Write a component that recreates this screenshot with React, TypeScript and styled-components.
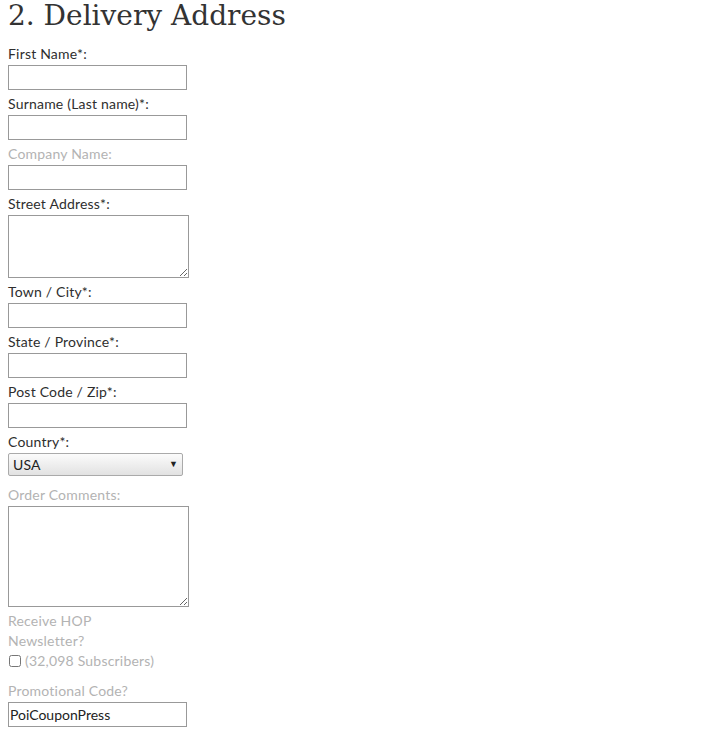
import React from 'react';
import styled, {createGlobalStyle} from 'styled-components';

const Global = createGlobalStyle`
  body {
    margin: 0;
    padding: 0 8px;
    background: white;
    font-family: Lato, "Open Sans", sans-serif;
    color: #333;
  }
`;

const Title = styled.h2`
  font-family: "DejaVu Serif", "Liberation Serif", serif;
  font-weight: 300;
  font-size: 28px;
  line-height: 32px;
  margin: 0 0 12px;
  color: #333;
`;

const Form = styled.form`
  display: flex;
  flex-direction: column;
  align-items: flex-start;
`;

const Label = styled.label<{$muted?: boolean; $narrow?: boolean}>`
  display: block;
  font-size: 14px;
  line-height: 20px;
  letter-spacing: 0.2px;
  color: ${p => (p.$muted ? '#b3b3b3' : '#2e2e2e')};
  width: ${p => (p.$narrow ? '100px' : 'auto')};
`;

const Input = styled.input`
  box-sizing: border-box;
  width: 179px;
  height: 25px;
  margin: 1px 0 4px;
  border: 1px solid #999;
  padding: 2px 1px;
  font-family: Lato, sans-serif;
  font-size: 14px;
  color: #222;
`;

const Area = styled.textarea<{$rows: number}>`
  box-sizing: border-box;
  display: block;
  width: 181px;
  height: ${p => p.$rows}px;
  margin: 1px 0 4px;
  border: 1px solid #999;
`;

const SelectBox = styled.div`
  position: relative;
  width: 175px;
  margin: 1px 0 9px;
  &::after {
    content: '▼';
    position: absolute;
    right: 5px;
    top: 5px;
    font-size: 9px;
    color: #222;
    pointer-events: none;
  }
`;

const Select = styled.select`
  box-sizing: border-box;
  appearance: none;
  display: block;
  width: 100%;
  height: 23px;
  border: 1px solid #aaa;
  border-radius: 2px;
  background: linear-gradient(#fbfbfb, #e2e2e2);
  font-family: Lato, sans-serif;
  font-size: 14px;
  letter-spacing: 0.2px;
  color: #222;
  padding: 0 4px;
`;

const CheckRow = styled.div`
  display: flex;
  align-items: center;
  gap: 4px;
  font-size: 14px;
  line-height: 20px;
  letter-spacing: 0.2px;
  color: #b3b3b3;
  margin-bottom: 10px;
  input {
    margin: 0 0 0 1px;
    width: 12px;
    height: 12px;
  }
`;

const fields = [
  {label: 'First Name*:'},
  {label: 'Surname (Last name)*:'},
  {label: 'Company Name:', muted: true},
];

export default function App() {
  return (
    <>
      <Global/>
      <Title>2. Delivery Address</Title>
      <Form>
        {fields.map(f =>
          <React.Fragment key={f.label}>
            <Label $muted={f.muted}>{f.label}</Label>
            <Input type="text"/>
          </React.Fragment>
        )}
        <Label>Street Address*:</Label>
        <Area $rows={63}/>
        <Label>Town / City*:</Label>
        <Input type="text"/>
        <Label>State / Province*:</Label>
        <Input type="text"/>
        <Label>Post Code / Zip*:</Label>
        <Input type="text"/>
        <Label>Country*:</Label>
        <SelectBox>
          <Select defaultValue="USA">
            <option>USA</option>
            <option>Canada</option>
          </Select>
        </SelectBox>
        <Label $muted>Order Comments:</Label>
        <Area $rows={101}/>
        <Label $muted $narrow>Receive HOP Newsletter?</Label>
        <CheckRow>
          <input type="checkbox"/>
          <span>(32,098 Subscribers)</span>
        </CheckRow>
        <Label $muted>Promotional Code?</Label>
        <Input type="text" defaultValue="PoiCouponPress"/>
      </Form>
    </>
  );
}
